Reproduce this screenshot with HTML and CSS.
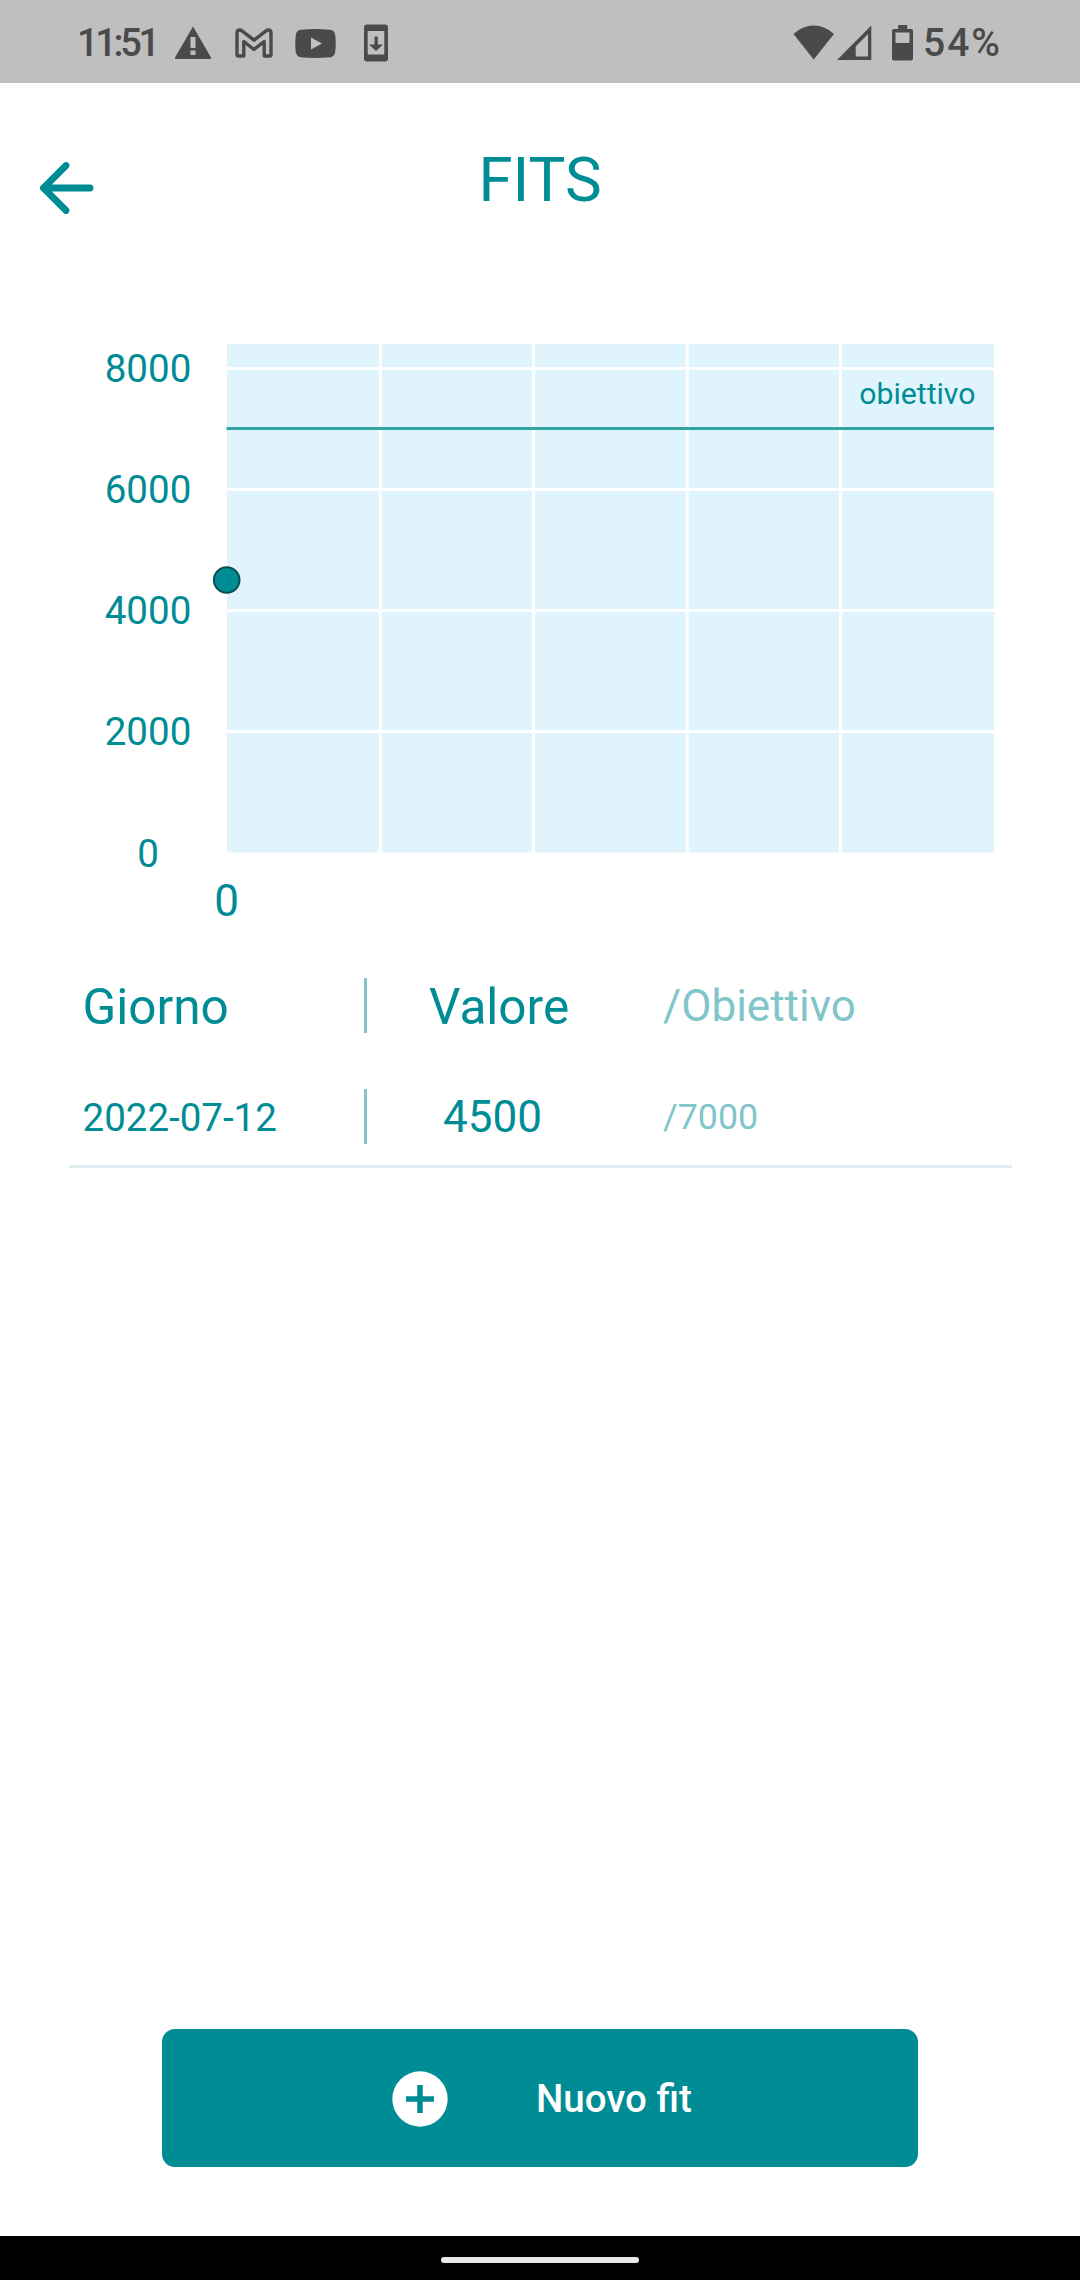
FILE: index.html
```html
<!DOCTYPE html>
<html lang="it">
<head>
<meta charset="utf-8">
<title>FITS</title>
<link rel="stylesheet" href="styles.css">
</head>
<body>
<div class="screen">
  <div class="status">
    <span class="clock">11:51</span>
    <svg class="i-warn" width="38" height="34" viewBox="0 0 38 34"><path fill-rule="evenodd" d="M19 .5 37 31.500q.5 1.500-1 1.500H2q-1.500 0-1-1.500ZM16.500 11v11h5V11ZM16.500 24.500v4.500h5v-4.500Z"/></svg>
    <svg class="i-mail" width="38" height="30" viewBox="0 0 38 30"><path class="line" d="M2 26.500V5Q2 2 4.700 2Q6 2 7 2.900L19 12.200 31 2.900Q32 2 33.300 2Q36 2 36 5V26.500Q36 28 34.500 28H29.200V13.500L19 21.500 8.800 13.500V28H3.500Q2 28 2 26.500Z"/></svg>
    <svg class="i-video" width="41" height="29" viewBox="0 0 41 29"><path fill-rule="evenodd" d="M6 .8Q20.500-.8 35 .8Q39.500 1.200 40.200 6Q41.300 14.500 40.200 23Q39.500 27.800 35 28.200Q20.500 29.800 6 28.200Q1.500 27.800.8 23Q-.3 14.500.8 6Q1.500 1.200 6 .8ZM16 8.500v12l11-6Z"/></svg>
    <svg class="i-update" width="24" height="38" viewBox="0 0 24 38"><path fill-rule="evenodd" d="M3 .5h18q3 0 3 3v31q0 3-3 3H3q-3 0-3-3v-31q0-3 3-3ZM3.700 7v23.500h16.600V7ZM10.500 12.500h3.300v8H19l-7 6.500-7-6.500h5.500Z"/></svg>
    <svg class="i-wifi" width="42" height="35" viewBox="0 0 42 35"><path d="M.5 9Q9.500.5 20.700.5T41 9L20.700 34.500Z"/></svg>
    <svg class="i-signal" width="35" height="35" viewBox="0 0 35 35"><path fill-rule="evenodd" d="M34.300.5V35H0ZM31 9 18.700 21.500V31.500H31Z"/></svg>
    <svg class="i-battery" width="21" height="36" viewBox="0 0 21 36"><path fill-rule="evenodd" d="M6.200 0h9v4H19q2 0 2 2v27.500q0 2-2 2H2q-2 0-2-2V6q0-2 2-2h4.200ZM3.500 7.500V18h14V7.500Z"/></svg>
    <span class="charge">54%</span>
  </div>

  <header class="header">
    <svg class="back" width="56" height="56" viewBox="0 0 56 56"><path d="M52 28H5.500M28 5.500 5.500 28 28 50.500"/></svg>
    <h1 class="title">FITS</h1>
  </header>

  <svg class="chart" width="1080" height="673" viewBox="0 277 1080 673">
    <rect class="plot" x="227" y="344" width="767" height="508.500"/>
    <path class="grid" d="M227 368.500H994M227 489.500H994M227 610.500H994M227 731.500H994M380.300 344V852.500M533.500 344V852.500M687.200 344V852.500M840.500 344V852.500"/>
    <path class="goal" d="M226.500 428.500H994"/>
    <circle class="point" cx="226.700" cy="580" r="12.800"/>
    <text class="goal-label" x="975.500" y="403.500">obiettivo</text>
    <g class="y-axis">
      <text x="148" y="381.500">8000</text>
      <text x="148" y="502.500">6000</text>
      <text x="148" y="623.500">4000</text>
      <text x="148" y="744.500">2000</text>
      <text x="148" y="866.500">0</text>
    </g>
    <text class="x-axis" x="226.700" y="915.500">0</text>
  </svg>

  <div class="table">
    <div class="row head">
      <span class="day">Giorno</span><i class="sep"></i><span class="value">Valore</span><span class="target">/Obiettivo</span>
    </div>
    <div class="row entry">
      <span class="day">2022-07-12</span><i class="sep"></i><span class="value">4500</span><span class="target">/7000</span>
    </div>
  </div>

  <button class="add">
    <svg width="56" height="56" viewBox="0 0 56 56"><circle cx="28" cy="28" r="27.700"/><path d="M28 14V42M14 28H42"/></svg>
    <span>Nuovo fit</span>
  </button>

  <div class="navbar"><div class="handle"></div></div>
</div>
</body>
</html>
```
FILE: styles.css
```css
* { box-sizing: border-box; }

body {
  margin: 0;
  background: #fff;
  color: #008c94;
  font-family: Roboto, sans-serif;
}

.screen {
  display: flex;
  flex-direction: column;
  width: 1080px;
  height: 2280px;
}

.status {
  display: flex;
  align-items: flex-start;
  flex: none;
  height: 83px;
  padding-left: 77px;
  background: #bfbfbf;
  color: #4a4a4a;
  fill: #4a4a4a;
  font-size: 38px;
  font-weight: 500;
  line-height: 44px;
}

.status svg { flex: none; }
.clock { width: 97px; margin-top: 21px; letter-spacing: -3.3px; }
.charge { margin: 21px 0 0 10px; font-size: 39px; letter-spacing: 2px; }
.i-warn { margin-top: 26px; }
.i-mail { margin: 28px 0 0 23px; }
.line { fill: none; stroke: #4a4a4a; stroke-width: 3.4; stroke-linejoin: round; }
.i-video { margin: 29px 0 0 22px; }
.i-update { margin: 24px 0 0 28px; }
.i-wifi { margin: 25px 0 0 405px; }
.i-signal { margin: 25px 0 0 2px; }
.i-battery { margin: 25px 0 0 20px; }

.header {
  display: grid;
  grid-template-columns: 150px 1fr 150px;
  align-items: center;
  flex: none;
  height: 194px;
}

.back {
  margin: 15px 0 0 37.5px;
  fill: none;
  stroke: #008c94;
  stroke-width: 6.8;
  stroke-linecap: round;
  stroke-linejoin: round;
}

.title {
  margin: 0;
  font-size: 61.8px;
  font-weight: 400;
  text-align: center;
}

.chart { display: block; flex: none; }
.chart text { fill: #008c94; }
.plot { fill: #e0f4fd; }
.grid { fill: none; stroke: #fff; stroke-width: 3; }
.goal { stroke: #33a3a3; stroke-width: 3; }
.point { fill: #008c94; stroke: #0a4f55; stroke-width: 2; }
.goal-label { font-size: 30.2px; text-anchor: end; }
.y-axis { font-size: 38.5px; text-anchor: middle; }
.x-axis { font-size: 44px; text-anchor: middle; }

.table { width: 943px; margin-left: 69px; }

.row {
  display: grid;
  grid-template-columns: 295px 3px 296px 1fr;
  align-items: center;
  height: 111px;
}

.sep { height: 55px; background: #80c5c9; }
.day { padding: 2px 0 0 13.5px; }
.target { color: #80c5c9; }

.head { font-size: 49.5px; }
.head .value { padding: 2px 0 0 62px; }
.head .target { font-size: 44px; }

.entry {
  height: 107px;
  padding-top: 7px;
  border-bottom: 3px solid #deeef2;
  font-size: 38.5px;
}
.entry .value { padding-left: 76px; font-size: 44px; }
.entry .target { font-size: 35.75px; }

.add {
  display: flex;
  align-items: center;
  width: 756px;
  height: 138px;
  margin: auto auto 69px;
  padding: 1px 0 0 230px;
  border: 0;
  border-radius: 13px;
  background: #008c94;
  color: #fff;
  font: 500 38.5px Roboto, sans-serif;
  gap: 88px;
}
.add circle { fill: #fff; }
.add path { stroke: #008c94; stroke-width: 5.5; }

.navbar {
  display: flex;
  justify-content: center;
  flex: none;
  height: 44px;
  padding-top: 21px;
  background: #000;
}
.handle { width: 198px; height: 6px; border-radius: 3px; background: #e8e8e8; }
```
